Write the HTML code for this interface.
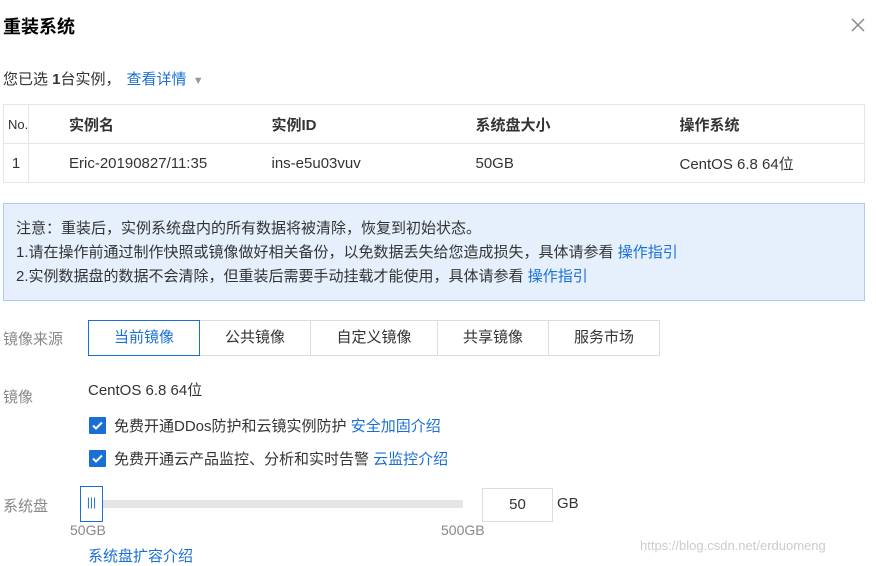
<!DOCTYPE html>
<html><head><meta charset="utf-8"><style>
*{margin:0;padding:0;box-sizing:border-box}
body{width:876px;height:565px;background:#fff;position:relative;overflow:hidden;font-family:"Liberation Sans","Noto Sans CJK SC",sans-serif;font-size:15px;color:#333}
.a{position:absolute;white-space:nowrap}
.b{color:#1a6fd6}
.g{color:#888}
table{position:absolute;left:3px;top:104px;width:862px;border-collapse:collapse;border:1px solid #e5e5e5;table-layout:fixed}
td{height:39px;border-top:1px solid #e5e5e5;padding:0;font-size:15px}
.tab{position:absolute;top:320px;height:36px;border:1px solid #ddd;text-align:center;line-height:34px;font-size:15px;color:#333;background:#fff}
.cb{position:absolute;left:89px;width:17px;height:17px;background:#1a6fd6;border-radius:1px}
</style></head><body>
<div class="a" style="left:3px;top:13px;font-size:18px;font-weight:bold;color:#000">重装系统</div>
<svg class="a" style="left:851px;top:18px" width="14" height="14"><path d="M1 1L13 13M13 1L1 13" stroke="#888" stroke-width="1.5"/></svg>
<div class="a" style="left:3px;top:68px">您已选 <b>1</b>台实例，<span class="b" style="margin-left:6px">查看详情</span> <span style="color:#999;font-size:11px;margin-left:2px">▼</span></div>
<table>
<colgroup><col style="width:25px"><col style="width:243px"><col style="width:204px"><col style="width:204px"><col></colgroup>
<tr style="font-weight:bold"><td style="padding-left:4px;font-size:13px;border-right:1px solid #e5e5e5;font-weight:normal;overflow:hidden">No.</td><td style="padding-left:40px">实例名</td><td>实例ID</td><td>系统盘大小</td><td>操作系统</td></tr>
<tr><td style="text-align:center;border-right:1px solid #e5e5e5">1</td><td style="padding-left:40px">Eric-20190827/11:35</td><td>ins-e5u03vuv</td><td>50GB</td><td>CentOS 6.8 64位</td></tr>
</table>
<div style="position:absolute;left:3px;top:203px;width:862px;height:98px;background:#e5f0fc;border:1px solid #a9cdf2"></div>
<div class="a" style="left:16px;top:217px">注意：重装后，实例系统盘内的所有数据将被清除，恢复到初始状态。</div>
<div class="a" style="left:16px;top:241px">1.请在操作前通过制作快照或镜像做好相关备份，以免数据丢失给您造成损失，具体请参看 <span class="b">操作指引</span></div>
<div class="a" style="left:16px;top:265px">2.实例数据盘的数据不会清除，但重装后需要手动挂载才能使用，具体请参看 <span class="b">操作指引</span></div>
<div class="a g" style="left:3px;top:328px">镜像来源</div>
<div class="tab" style="left:199px;width:112px">公共镜像</div>
<div class="tab" style="left:310px;width:128px">自定义镜像</div>
<div class="tab" style="left:437px;width:112px">共享镜像</div>
<div class="tab" style="left:548px;width:112px">服务市场</div>
<div class="tab" style="left:88px;width:112px;border-color:#1a6fd6;color:#1a6fd6">当前镜像</div>
<div class="a g" style="left:3px;top:386px">镜像</div>
<div class="a" style="left:88px;top:379px">CentOS 6.8 64位</div>
<div class="cb" style="top:417px"><svg width="17" height="17"><path d="M4 8.5l3 3 6-6" stroke="#fff" stroke-width="2" fill="none"/></svg></div>
<div class="a" style="left:114px;top:415px">免费开通DDos防护和云镜实例防护 <span class="b">安全加固介绍</span></div>
<div class="cb" style="top:450px"><svg width="17" height="17"><path d="M4 8.5l3 3 6-6" stroke="#fff" stroke-width="2" fill="none"/></svg></div>
<div class="a" style="left:114px;top:448px">免费开通云产品监控、分析和实时告警 <span class="b">云监控介绍</span></div>
<div class="a g" style="left:3px;top:495px">系统盘</div>
<div style="position:absolute;left:90px;top:500px;width:373px;height:8px;background:#e5e5e5"></div>
<div style="position:absolute;left:80px;top:486px;width:23px;height:36px;border:1px solid #1a6fd6;background:#fff;text-align:center;line-height:30px;color:#1a6fd6;font-size:12px">|||</div>
<div style="position:absolute;left:482px;top:488px;width:71px;height:34px;border:1px solid #ddd;text-align:center;line-height:32px;font-size:15px">50</div>
<div class="a" style="left:557px;top:495px">GB</div>
<div class="a g" style="left:70px;top:522px;font-size:14px">50GB</div>
<div class="a g" style="left:441px;top:522px;font-size:14px">500GB</div>
<div class="a b" style="left:88px;top:545px">系统盘扩容介绍</div>
<div class="a" style="left:640px;top:538px;color:#ccc;font-size:13px">https://blog.csdn.net/erduomeng</div>
</body></html>
